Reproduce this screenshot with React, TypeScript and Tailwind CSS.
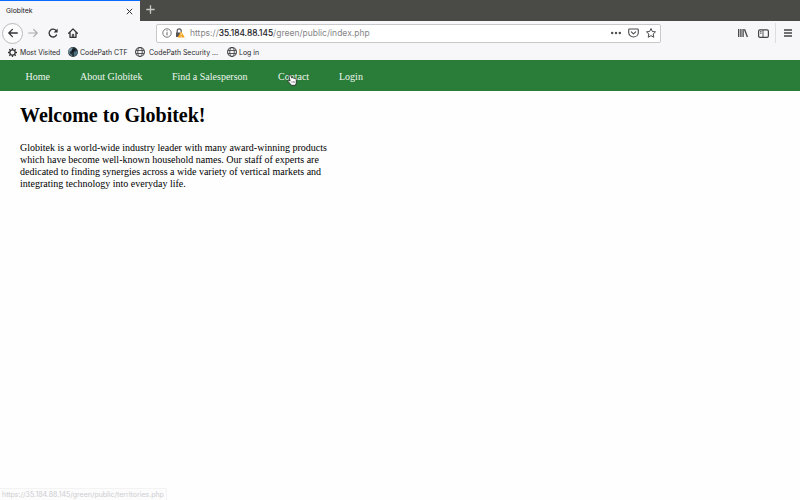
import React from "react";

const Globe = () => (
  <svg className="h-[10px] w-[10px] shrink-0" viewBox="0 0 16 16" fill="none" stroke="#424245" strokeWidth="1.4">
    <circle cx="8" cy="8" r="7.1" strokeWidth="1.7" />
    <ellipse cx="8" cy="8" rx="3.6" ry="7" />
    <path d="M1.700 5.600h12.600M1.700 10.400h12.600" />
  </svg>
);

const Gear = () => (
  <svg className="h-[9px] w-[9px] shrink-0" viewBox="0 0 18 18" fill="none" stroke="#38383b">
    <circle cx="9" cy="9" r="5.3" strokeWidth="2.5" />
    <path d="M9 0v4M9 14v4M0 9h4M14 9h4M2.6 2.6l2.700 2.700M12.700 12.700l2.700 2.700M15.4 2.6l-2.700 2.700M5.300 12.700l-2.700 2.700" strokeWidth="2.7" />
  </svg>
);

const Earth = () => (
  <svg className="h-[10px] w-[10px] shrink-0" viewBox="0 0 20 20">
    <circle cx="10" cy="10" r="9.8" fill="#26343c" />
    <path d="M1 6q4-6 9-5l-3 6-4 3 1 5-3-3z" fill="#7898a8" />
    <path d="M12 10l6-2 1 4-3 5-4 1z" fill="#4c7180" />
    <path d="M9 4l6-1-3 6-5 3z" fill="#101a20" />
    <path d="M3 13l4 2 2 4-4-2z" fill="#718b91" />
  </svg>
);

function Tabs() {
  return (
    <div className="flex h-[21px] bg-[#4a4a47]">
      <div className="flex w-[140px] items-center justify-between border-t border-[#0a6cff] bg-[#f7f7f9] pr-[7px] pl-[6px] text-[6.8px]">
        <span className="pt-px">Globitek</span>
        <svg className="h-[7px] w-[7px]" viewBox="0 0 7 7" stroke="#333" strokeWidth="1">
          <path d="M.8.8l5.4 5.4M6.2.8L.8 6.2" />
        </svg>
      </div>
      <svg className="mt-[5px] ml-[6px] h-[9px] w-[9px]" viewBox="0 0 9 9" stroke="#c9c9c8" strokeWidth="1.3">
        <path d="M4.5.3v8.4M.3 4.5h8.4" />
      </svg>
    </div>
  );
}

function Toolbar() {
  return (
    <div className="flex h-[24px] items-center bg-[#f7f7f9]">
      <div className="ml-[2px] flex h-[21px] w-[21px] items-center justify-center rounded-full border border-[#b9b9bb] bg-[#fcfcfd]">
        <svg className="h-[10px] w-[10px]" viewBox="0 0 10 10" fill="none" stroke="#343437" strokeWidth="1.3" strokeLinecap="round" strokeLinejoin="round">
          <path d="M9.3 5H.8M4.4 1.4L.8 5l3.6 3.6" />
        </svg>
      </div>
      <svg className="ml-[5px] h-[10px] w-[10px]" viewBox="0 0 10 10" fill="none" stroke="#a9a9ac" strokeWidth="1.1" strokeLinecap="round" strokeLinejoin="round">
        <path d="M.7 5h8.5M5.6 1.4L9.2 5 5.6 8.6" />
      </svg>
      <svg className="ml-[10px] h-[10px] w-[10px]" viewBox="0 0 10 10" fill="none" stroke="#343437" strokeWidth="1.3">
        <path d="M8.2 2.8A3.9 3.9 0 1 0 8.7 6.5" />
        <path d="M9.6.5v4H5.6z" fill="#343437" stroke="none" />
      </svg>
      <svg className="ml-[10px] h-[10px] w-[10px]" viewBox="0 0 10 10" fill="none" stroke="#343437" strokeWidth="1.3" strokeLinecap="round" strokeLinejoin="round">
        <path d="M.7 5.2L5 .9l4.3 4.3M2 4.5v4.8h6V4.5" />
        <path d="M4.3 9V6.4h1.4V9" strokeWidth="1" />
      </svg>
      <div className="ml-[78px] flex h-[19px] w-[505px] items-center rounded-[2px] border border-[#c9c9cb] bg-white">
        <svg className="ml-[5px] h-[10px] w-[10px]" viewBox="0 0 10 10" fill="none" stroke="#68686b" strokeWidth=".9">
          <circle cx="5" cy="5" r="4.2" />
          <path d="M5 4.3v3M5 2.3v1" strokeWidth="1.1" />
        </svg>
        <svg className="ml-[3px] h-[10px] w-[10px]" viewBox="0 0 10 10">
          <path d="M2.2 5V2.8a2 2 0 0 1 4 0V4" fill="none" stroke="#555558" strokeWidth="1.2" />
          <path d="M1 4.4h5L3.4 9H1z" fill="#555558" />
          <path d="M6.2 3.3L9.8 9.6H2.6z" fill="#f5a51c" />
          <path d="M6.2 5.3v2M6.2 8v.8" stroke="#fff" strokeWidth=".8" />
        </svg>
        <span className="ml-[5px] pt-px text-[8.5px] tracking-[0.01px] whitespace-nowrap text-[#858587]">
          https://<span className="text-[#202023] [-webkit-text-stroke:0.15px_#202023]">35.184.88.145</span>/green/public/index.php
        </span>
        <div className="mr-[4px] ml-auto flex items-center">
          <svg className="h-[10px] w-[10px]" viewBox="0 0 10 10" fill="#4b4b4e">
            <circle cx="1.2" cy="5" r="1.2" /><circle cx="5" cy="5" r="1.2" /><circle cx="8.8" cy="5" r="1.2" />
          </svg>
          <svg className="ml-[7px] h-[10px] w-[11px]" viewBox="0 0 11 10" fill="none" stroke="#4b4b4e" strokeWidth="1.1" strokeLinecap="round" strokeLinejoin="round">
            <path d="M1.5 1h8q.8 0 .8.8V4.5a4.8 4.5 0 0 1-9.6 0V1.8q0-.8.8-.8z" /><path d="M3.3 3.9l2.2 2 2.2-2" />
          </svg>
          <svg className="ml-[7px] h-[10px] w-[10px]" viewBox="0 0 20 20" fill="none" stroke="#4b4b4e" strokeWidth="2" strokeLinejoin="round">
            <path d="M10 1l2.7 6 6.3.7-4.7 4.3 1.3 6.5L10 15.3l-5.6 3.2L5.7 12 1 7.7l6.300-.7z" />
          </svg>
        </div>
      </div>
      <div className="ml-auto flex items-center pr-[8px]">
        <svg className="h-[10px] w-[10px]" viewBox="0 0 10 10" stroke="#454548" strokeWidth="1.3">
          <path d="M.7 1v8M2.9 1v8M5.1 1v8M6.5 1.2L9.4 8.9" />
        </svg>
        <svg className="ml-[10px] h-[9px] w-[11px]" viewBox="0 0 11 9" fill="none" stroke="#454548" strokeWidth="1.2">
          <rect x=".6" y=".8" width="9.8" height="7.5" rx="1.4" /><path d="M5 1v7M2 2.700h1.600M2 4.200h1.600" strokeWidth=".9" />
        </svg>
        <div className="ml-[6px] h-[20px] w-px bg-[#dddddf]" />
        <svg className="ml-[8px] h-[8px] w-[8px]" viewBox="0 0 8 8" stroke="#454548" strokeWidth="1.3">
          <path d="M0 1h8M0 4h8M0 7h8" />
        </svg>
      </div>
    </div>
  );
}

function Bookmarks() {
  return (
    <div className="flex h-[15px] items-center bg-[#f7f7f9] pb-px pl-[8px] text-[6.9px] whitespace-nowrap text-[#29292c]">
      <Gear />
      <span className="ml-[3px] w-[48px] pt-[2px]">Most Visited</span>
      <Earth />
      <span className="ml-[2px] w-[55px] pt-[2px]">CodePath CTF</span>
      <Globe />
      <span className="ml-[4px] w-[78px] pt-[2px]">CodePath Security ...</span>
      <Globe />
      <span className="ml-[2px] pt-[2px] tracking-[0.03px]">Log in</span>
    </div>
  );
}

const serif = "font-['Liberation_Serif',serif]";

export default function App() {
  return (
    <div className="relative h-[500px] w-[800px] overflow-hidden bg-[#fefefe] font-[Inter,sans-serif] text-[#202023]">
      <Tabs />
      <Toolbar />
      <Bookmarks />
      <nav className={`${serif} flex h-[31px] items-center bg-[#297d38] pt-px pl-[25.5px] text-[10px] whitespace-nowrap text-[#eef6ef]`}>
        <span className="w-[54.5px]">Home</span>
        <span className="w-[92px]">About Globitek</span>
        <span className="w-[106px]">Find a Salesperson</span>
        <span className="w-[61px]">Contact</span>
        <span>Login</span>
      </nav>
      <main className={`${serif} px-[20px] whitespace-nowrap text-black`}>
        <h1 className="pt-[12px] text-[20px] leading-[24px] font-bold">Welcome to Globitek!</h1>
        <p className="mt-[15px] text-[10px] leading-[12px]">
          Globitek is a world-wide industry leader with many award-winning products<br />
          which have become well-known household names. Our staff of experts are<br />
          dedicated to finding synergies across a wide variety of vertical markets and<br />
          integrating technology into everyday life.
        </p>
      </main>
      <svg className="absolute top-[74px] left-[287px] h-[12px] w-[10px]" viewBox="0 0 10 12" strokeLinejoin="round">
        <path d="M2.3 1q1-.8 1.5.3l.8 2.7q1-.8 1.5.1 1-.5 1.5.4 1.2-.3 1.5.9l.4 2.6-1 3.3H4.5L1 7.3q-.4-1.2.8-1.1l1.3.9L2 2z" fill="#fff" stroke="#222" strokeWidth=".8" />
        <path d="M5 7v2M6.4 7v2M7.8 7v2" stroke="#555" strokeWidth=".5" />
      </svg>
      <div className="absolute bottom-0 left-0 flex h-[12px] w-[167px] items-center border-t border-r border-[#f3f3f4] bg-[#fcfcfd] pt-[2px] pl-[2px] text-[7px] whitespace-nowrap text-[#cdcdcf]">
        https://35.184.88.145/green/public/territories.php
      </div>
    </div>
  );
}
